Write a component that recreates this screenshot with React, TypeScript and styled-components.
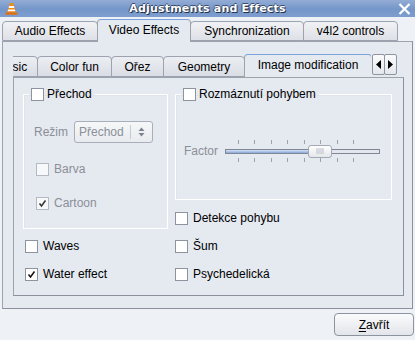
import styled, { createGlobalStyle } from "styled-components";

const GlobalStyle = createGlobalStyle`
  body {
    margin: 0;
    background: #eef1f5;
  }
  * {
    box-sizing: border-box;
  }
`;

const colors = {
  bg: "#eef1f5",
  pane: "#e5e9f0",
  border: "#9ca3ae",
  borderDark: "#8a919c",
  text: "#000000",
  disabled: "#8b8f97",
  accent: "#7ba2de",
};

const Window = styled.div`
  width: 415px;
  height: 340px;
  display: flex;
  flex-direction: column;
  background: ${colors.bg};
  font-family: "Liberation Sans", Arial, sans-serif;
  font-size: 12px;
  color: ${colors.text};
  overflow: hidden;
`;

const TitleBar = styled.div`
  height: 17px;
  display: grid;
  grid-template-columns: 24px 1fr 24px;
  align-items: center;
  background: linear-gradient(180deg, #93acd4 0%, #7496c9 55%, #7f9ecf 100%);
`;

const TitleText = styled.div`
  text-align: center;
  font-family: "DejaVu Sans", sans-serif;
  font-weight: bold;
  font-size: 11px;
  color: #ffffff;
  letter-spacing: 0.2px;
  text-shadow: 1px 1px 0 #26324a, -1px 0 0 #3a4c6e, 0 -1px 0 #3a4c6e;
`;

const IconSlot = styled.div<{ $align: "left" | "right" }>`
  display: flex;
  justify-content: ${(p) => (p.$align === "left" ? "flex-start" : "flex-end")};
  padding: ${(p) => (p.$align === "left" ? "0 0 0 5px" : "0 4px 0 0")};
`;

const OuterTabBar = styled.div`
  height: 24px;
  display: flex;
  align-items: flex-end;
  padding-left: 2px;
`;

const OuterTab = styled.div<{ $active?: boolean; $w: number }>`
  position: relative;
  width: ${(p) => p.$w + 1}px;
  margin-right: -1px;
  height: ${(p) => (p.$active ? 23 : 20)}px;
  margin-bottom: ${(p) => (p.$active ? -1 : 0)}px;
  z-index: ${(p) => (p.$active ? 2 : 1)};
  display: flex;
  align-items: center;
  justify-content: center;
  padding-bottom: ${(p) => (p.$active ? 2 : 0)}px;
  border: 1px solid ${colors.border};
  border-bottom: ${(p) => (p.$active ? "none" : `1px solid ${colors.border}`)};
  border-top-color: ${(p) => (p.$active ? colors.accent : colors.border)};
  border-radius: 4px 4px 0 0;
  background: ${(p) =>
    p.$active ? colors.pane : "linear-gradient(180deg, #f1f2f5 0%, #dde0e6 100%)"};
  font-size: 12px;
  white-space: nowrap;
`;

const OuterPane = styled.div`
  margin: 0 2px 0 2px;
  height: 268px;
  border: 1px solid ${colors.border};
  border-right-color: ${colors.borderDark};
  border-bottom-color: ${colors.borderDark};
  background: ${colors.pane};
  padding: 10px 8px 0 10px;
  display: flex;
  flex-direction: column;
`;

const InnerTabBar = styled.div`
  height: 25px;
  display: flex;
  align-items: flex-end;
`;

const TabClip = styled.div`
  width: 358px;
  height: 100%;
  overflow: hidden;
  display: flex;
  align-items: flex-end;
`;

const TabStrip = styled.div`
  display: flex;
  align-items: flex-end;
  margin-left: -26px;
  height: 100%;
`;

const InnerTab = styled(OuterTab)`
  height: ${(p) => (p.$active ? 24 : 21)}px;
  padding-bottom: ${(p) => (p.$active ? 3 : 0)}px;
  flex-shrink: 0;
  background: ${(p) =>
    p.$active ? colors.pane : "linear-gradient(180deg, #eceef2 0%, #d9dde4 100%)"};
`;

const ScrollButtons = styled.div`
  display: flex;
  margin: 0 0 2px 1px;
`;

const ScrollButton = styled.div`
  width: 13px;
  height: 21px;
  margin-right: -1px;
  border: 1px solid #8e95a0;
  border-radius: 2px;
  background: linear-gradient(180deg, #fbfbfc 0%, #e4e7ec 100%);
  display: flex;
  align-items: center;
  justify-content: center;
`;

const InnerPane = styled.div`
  height: 219px;
  width: 391px;
  border: 1px solid ${colors.border};
  border-right-color: ${colors.borderDark};
  border-bottom-color: ${colors.borderDark};
  background: ${colors.pane};
  padding: 10px 0 0 9px;
  display: grid;
  grid-template-columns: 145px 217px;
  grid-template-rows: 116px 28px 28px 28px;
  column-gap: 7px;
  grid-template-areas:
    "lg rg"
    "lg det"
    "waves sum"
    "water psy";
  align-content: start;
`;

const Group = styled.fieldset<{ $area: string; $h: number }>`
  grid-area: ${(p) => p.$area};
  height: ${(p) => p.$h}px;
  align-self: start;
  margin: 0;
  padding: 0;
  border: 1px solid #ffffff;
  box-shadow: inset 1px 1px 0 #dfe3ea;
  min-width: 0;
`;

const GroupBody = styled.div<{ $pad: number }>`
  padding-left: ${(p) => p.$pad}px;
`;

const Legend = styled.legend`
  margin-left: 5px;
  padding: 0 3px 0 2px;
  display: flex;
  align-items: center;
  gap: 3px;
  height: 13px;
  line-height: 13px;
`;

const Box = styled.span<{ $disabled?: boolean }>`
  width: 13px;
  height: 13px;
  flex-shrink: 0;
  display: inline-flex;
  align-items: center;
  justify-content: center;
  border: 1px solid ${(p) => (p.$disabled ? "#b4b9c2" : "#8d949f")};
  background: ${(p) => (p.$disabled ? "#f7f8fa" : "#ffffff")};
`;

const CheckRow = styled.div<{ $area?: string; $indent?: number; $disabled?: boolean }>`
  grid-area: ${(p) => p.$area || "auto"};
  display: flex;
  align-items: center;
  gap: 5px;
  padding-left: ${(p) => p.$indent || 0}px;
  color: ${(p) => (p.$disabled ? colors.disabled : colors.text)};
  white-space: nowrap;
`;

const ModeRow = styled.div`
  display: flex;
  align-items: center;
  gap: 6px;
  margin: 20px 0 19px 0;
  color: ${colors.disabled};
`;

const Combo = styled.div`
  width: 79px;
  height: 22px;
  display: flex;
  align-items: center;
  border: 1px solid #a9afb8;
  border-radius: 3px;
  background: linear-gradient(180deg, #f6f7f9 0%, #e8ebef 100%);
  color: ${colors.disabled};
`;

const ComboText = styled.span`
  flex: 1;
  padding-left: 4px;
`;

const ComboArrow = styled.span`
  width: 22px;
  height: 14px;
  border-left: 1px solid #c6cad1;
  display: flex;
  align-items: center;
  justify-content: center;
`;

const Stack = styled.div<{ $gap: number }>`
  display: flex;
  flex-direction: column;
  gap: ${(p) => p.$gap}px;
  padding-left: 2px;
`;

const FactorRow = styled.div`
  display: flex;
  align-items: center;
  gap: 7px;
  margin-top: 39px;
  color: ${colors.disabled};
`;

const SliderBox = styled.div`
  width: 155px;
  height: 22px;
  display: flex;
  flex-direction: column;
  justify-content: space-between;
`;

const Ticks = styled.div`
  height: 4px;
  display: flex;
  justify-content: space-between;
  margin: 0 26px 0 13px;
`;

const Tick = styled.span`
  width: 1px;
  height: 4px;
  background: #9ba2ad;
`;

const Groove = styled.div`
  position: relative;
  height: 5px;
  border: 1px solid #7f8796;
  background: #e3e7ed;
`;

const GrooveFill = styled.div`
  height: 100%;
  background: linear-gradient(180deg, #d6e3f6 0%, #88a8d8 100%);
`;

const Handle = styled.div`
  position: absolute;
  top: -5px;
  width: 24px;
  height: 13px;
  border: 1px solid #a3a9b3;
  border-radius: 3px;
  background: linear-gradient(180deg, #ffffff 0%, #e3e6eb 100%);
  display: flex;
  align-items: center;
  justify-content: center;
`;

const Grip = styled.span`
  width: 8px;
  height: 6px;
  background-image: radial-gradient(circle, #b5bbc5 0.6px, transparent 0.8px);
  background-size: 2px 2px;
`;

const Footer = styled.div`
  display: flex;
  justify-content: flex-end;
  padding: 4px 1px 0 0;
`;

const Button = styled.div`
  width: 80px;
  height: 23px;
  display: flex;
  align-items: center;
  justify-content: center;
  border: 1px solid #8d949f;
  border-radius: 4px;
  background: linear-gradient(180deg, #fafbfc 0%, #e2e5ea 100%);
  u {
    text-decoration: underline;
    text-underline-offset: 2px;
  }
`;

const Check: React.FC<{ checked?: boolean; disabled?: boolean }> = ({ checked, disabled }) => (
  <Box $disabled={disabled}>
    {checked && (
      <svg width="9" height="9" viewBox="0 0 9 9">
        <path d="M1.5 4.5 L3.5 7 L7.5 1.5" fill="none" stroke={disabled ? "#333" : "#111"} strokeWidth="1.5" />
      </svg>
    )}
  </Box>
);

const VlcIcon = () => (
  <svg width="13" height="13" viewBox="0 0 13 13">
    <path d="M5 1 H8 L11 10.5 H2 Z" fill="#f08a12" />
    <path d="M4.2 4 H8.8 L9.4 6 H3.6 Z" fill="#ffffff" />
    <path d="M3.1 7.6 H9.9 L10.4 9.2 H2.6 Z" fill="#ffffff" />
    <rect x="0.5" y="10.5" width="12" height="2.2" rx="0.6" fill="#e46f0a" />
  </svg>
);

const CloseIcon = () => (
  <svg width="13" height="12" viewBox="0 0 13 12">
    <path d="M1.5 1 L11.5 11 M11.5 1 L1.5 11" stroke="#ffffff" strokeWidth="2.2" />
  </svg>
);

const Arrow: React.FC<{ dir: "left" | "right" }> = ({ dir }) => (
  <svg width="5" height="9" viewBox="0 0 5 9">
    <path d={dir === "left" ? "M5 0 L0 4.5 L5 9 Z" : "M0 0 L5 4.5 L0 9 Z"} fill="#000" />
  </svg>
);

const outerTabs = [
  { label: "Audio Effects", w: 95 },
  { label: "Video Effects", w: 93, active: true },
  { label: "Synchronization", w: 113 },
  { label: "v4l2 controls", w: 94 },
];

const innerTabs = [
  { label: "Basic", w: 50 },
  { label: "Color fun", w: 74 },
  { label: "Ořez", w: 52 },
  { label: "Geometry", w: 81 },
  { label: "Image modification", w: 127, active: true },
];

const factor = 0.535;

const App: React.FC = () => {
  const handleLeft = Math.round(factor * 155);
  return (
    <>
      <GlobalStyle />
      <Window>
        <TitleBar>
          <IconSlot $align="left">
            <VlcIcon />
          </IconSlot>
          <TitleText>Adjustments and Effects</TitleText>
          <IconSlot $align="right">
            <CloseIcon />
          </IconSlot>
        </TitleBar>
        <OuterTabBar>
          {outerTabs.map((t) => (
            <OuterTab key={t.label} $w={t.w} $active={t.active}>
              {t.label}
            </OuterTab>
          ))}
        </OuterTabBar>
        <OuterPane>
          <InnerTabBar>
            <TabClip>
              <TabStrip>
                {innerTabs.map((t) => (
                  <InnerTab key={t.label} $w={t.w} $active={t.active}>
                    {t.label}
                  </InnerTab>
                ))}
              </TabStrip>
            </TabClip>
            <ScrollButtons>
              <ScrollButton>
                <Arrow dir="left" />
              </ScrollButton>
              <ScrollButton>
                <Arrow dir="right" />
              </ScrollButton>
            </ScrollButtons>
          </InnerTabBar>
          <InnerPane>
            <Group $area="lg" $h={141}>
              <Legend>
                <Check />
                Přechod
              </Legend>
              <GroupBody $pad={10}>
                <ModeRow>
                  Režim
                  <Combo>
                    <ComboText>Přechod</ComboText>
                    <ComboArrow>
                      <svg width="7" height="10" viewBox="0 0 7 10">
                        <path d="M3.5 0.5 L6.5 4 H0.5 Z M3.5 9.5 L6.5 6 H0.5 Z" fill="#7d838d" />
                      </svg>
                    </ComboArrow>
                  </Combo>
                </ModeRow>
                <Stack $gap={20}>
                  <CheckRow $disabled>
                    <Check disabled />
                    Barva
                  </CheckRow>
                  <CheckRow $disabled>
                    <Check checked disabled />
                    Cartoon
                  </CheckRow>
                </Stack>
              </GroupBody>
            </Group>
            <Group $area="rg" $h={112}>
              <Legend>
                <Check />
                Rozmáznutí pohybem
              </Legend>
              <GroupBody $pad={8}>
                <FactorRow>
                  Factor
                  <SliderBox>
                    <Ticks>
                      {Array.from({ length: 8 }).map((_, i) => (
                        <Tick key={i} />
                      ))}
                    </Ticks>
                    <Groove>
                      <GrooveFill style={{ width: handleLeft }} />
                      <Handle style={{ left: handleLeft - 1 }}>
                        <Grip />
                      </Handle>
                    </Groove>
                    <Ticks>
                      {Array.from({ length: 8 }).map((_, i) => (
                        <Tick key={i} />
                      ))}
                    </Ticks>
                  </SliderBox>
                </FactorRow>
              </GroupBody>
            </Group>
            <CheckRow $area="det">
              <Check />
              Detekce pohybu
            </CheckRow>
            <CheckRow $area="waves" $indent={2}>
              <Check />
              Waves
            </CheckRow>
            <CheckRow $area="sum">
              <Check />
              Šum
            </CheckRow>
            <CheckRow $area="water" $indent={2}>
              <Check checked />
              Water effect
            </CheckRow>
            <CheckRow $area="psy">
              <Check />
              Psychedelická
            </CheckRow>
          </InnerPane>
        </OuterPane>
        <Footer>
          <Button>
            <span>
              <u>Z</u>avřít
            </span>
          </Button>
        </Footer>
      </Window>
    </>
  );
};

export default App;
